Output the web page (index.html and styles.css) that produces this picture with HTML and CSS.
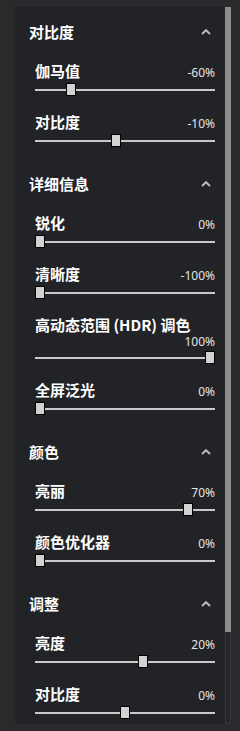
FILE: index.html
```html
<!DOCTYPE html>
<html lang="zh-CN">
<head>
    <meta charset="UTF-8">
    <meta name="viewport" content="width=device-width, initial-scale=1.0">
    <title>显示设置</title>
    <link rel="stylesheet" href="styles.css">
</head>
<body>
    <div class="frame">
        <div class="panel">
            <div class="section">
                <div class="section-header">
                    <span>对比度</span>
                    <svg class="chevron" width="10" height="6" viewBox="0 0 10 6"><polyline points="1,5 5,1.2 9,5" fill="none" stroke="#bdbdbd" stroke-width="2"/></svg>
                </div>
                <div class="item">
                    <div class="item-row"><span class="label">伽马值</span><span class="value">-60%</span></div>
                    <div class="slider"><div class="track"></div><div class="thumb" style="--pos: 0.182"></div></div>
                </div>
                <div class="item">
                    <div class="item-row"><span class="label">对比度</span><span class="value">-10%</span></div>
                    <div class="slider"><div class="track"></div><div class="thumb" style="--pos: 0.447"></div></div>
                </div>
            </div>

            <div class="section">
                <div class="section-header">
                    <span>详细信息</span>
                    <svg class="chevron" width="10" height="6" viewBox="0 0 10 6"><polyline points="1,5 5,1.2 9,5" fill="none" stroke="#bdbdbd" stroke-width="2"/></svg>
                </div>
                <div class="item">
                    <div class="item-row"><span class="label">锐化</span><span class="value">0%</span></div>
                    <div class="slider"><div class="track"></div><div class="thumb" style="--pos: 0"></div></div>
                </div>
                <div class="item">
                    <div class="item-row"><span class="label">清晰度</span><span class="value">-100%</span></div>
                    <div class="slider"><div class="track"></div><div class="thumb" style="--pos: 0"></div></div>
                </div>
                <div class="item">
                    <div class="item-row"><span class="label">高动态范围 (HDR) 调色</span><span class="value">100%</span></div>
                    <div class="slider"><div class="track"></div><div class="thumb" style="--pos: 1"></div></div>
                </div>
                <div class="item">
                    <div class="item-row"><span class="label">全屏泛光</span><span class="value">0%</span></div>
                    <div class="slider"><div class="track"></div><div class="thumb" style="--pos: 0"></div></div>
                </div>
            </div>

            <div class="section">
                <div class="section-header">
                    <span>颜色</span>
                    <svg class="chevron" width="10" height="6" viewBox="0 0 10 6"><polyline points="1,5 5,1.2 9,5" fill="none" stroke="#bdbdbd" stroke-width="2"/></svg>
                </div>
                <div class="item">
                    <div class="item-row"><span class="label">亮丽</span><span class="value">70%</span></div>
                    <div class="slider"><div class="track"></div><div class="thumb" style="--pos: 0.871"></div></div>
                </div>
                <div class="item">
                    <div class="item-row"><span class="label">颜色优化器</span><span class="value">0%</span></div>
                    <div class="slider"><div class="track"></div><div class="thumb" style="--pos: 0"></div></div>
                </div>
            </div>

            <div class="section">
                <div class="section-header">
                    <span>调整</span>
                    <svg class="chevron" width="10" height="6" viewBox="0 0 10 6"><polyline points="1,5 5,1.2 9,5" fill="none" stroke="#bdbdbd" stroke-width="2"/></svg>
                </div>
                <div class="item">
                    <div class="item-row"><span class="label">亮度</span><span class="value">20%</span></div>
                    <div class="slider"><div class="track"></div><div class="thumb" style="--pos: 0.606"></div></div>
                </div>
                <div class="item">
                    <div class="item-row"><span class="label">对比度</span><span class="value">0%</span></div>
                    <div class="slider"><div class="track"></div><div class="thumb" style="--pos: 0.5"></div></div>
                </div>
            </div>
        </div>
        <div class="scrollbar"><div class="scroll-thumb"></div></div>
    </div>
</body>
</html>
```

FILE: styles.css
```css
body {
    margin: 0;
    background-color: #2a2a2c;
    font-family: "Noto Sans", "Noto Sans CJK SC", sans-serif;
    overflow: hidden;
}
.frame {
    display: flex;
    margin: 7px 9px 0 15px;
    height: 717px;
}
.panel {
    width: 210px;
    height: 717px;
    overflow: hidden;
    background-color: #222327;
    padding-top: 4px;
    box-sizing: border-box;
}
.section {
    padding-top: 11px;
}
.section-header {
    display: flex;
    align-items: center;
    justify-content: space-between;
    padding: 0 14px 0 14px;
    height: 20px;
    margin-bottom: 19px;
    color: #ffffff;
    font-family: "Noto Sans CJK SC", sans-serif;
    font-weight: bold;
    font-size: 15px;
    line-height: 20px;
}
.chevron {
    display: block;
    margin-top: -1px;
}
.item {
    padding: 0 10px 16px 20px;
}
.item-row {
    display: flex;
    flex-wrap: wrap;
    align-items: baseline;
    justify-content: space-between;
    margin-bottom: 2px;
}
.label {
    color: #ffffff;
    font-family: "Noto Sans CJK SC", sans-serif;
    font-weight: bold;
    font-size: 15px;
    line-height: 20px;
    margin-right: 6px;
}
.value {
    margin-left: auto;
    color: #e4e4e4;
    font-size: 12px;
    line-height: 14px;
}
.slider {
    position: relative;
    height: 13px;
}
.track {
    position: absolute;
    left: 0;
    right: 0;
    top: 5.5px;
    height: 2px;
    background-color: #c9c9c9;
}
.thumb {
    position: absolute;
    top: 0;
    left: calc((100% - 10px) * var(--pos));
    width: 8px;
    height: 11px;
    background-color: #d2d2d2;
    border: 1px solid #000000;
}
.scrollbar {
    width: 6px;
    height: 717px;
    display: flex;
    flex-direction: column;
    background-color: #26272a;
    box-sizing: border-box;
    border: 1px solid #37383b;
    border-top: none;
}
.scroll-thumb {
    height: 625px;
    margin: 0 -1px;
    background-color: #8c8c8c;
}
```
